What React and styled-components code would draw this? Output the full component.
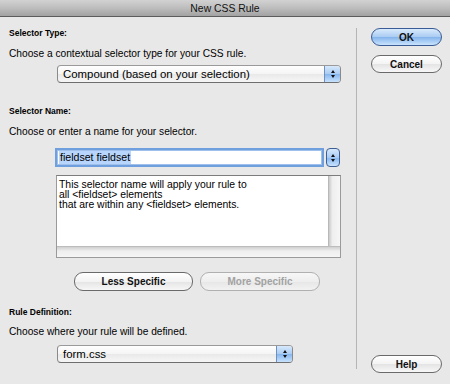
import React from "react";
import styled, { createGlobalStyle } from "styled-components";

const Global = createGlobalStyle`
  html, body { margin: 0; padding: 0; background: #e8e8e8; }
  body { font-family: "Liberation Sans", Arial, sans-serif; color: #000; }
`;

const Window = styled.div`
  width: 450px;
  height: 384px;
  background: #e8e8e8;
  display: flex;
  flex-direction: column;
  overflow: hidden;
`;

const TitleBar = styled.div`
  border-bottom: 1px solid #5c5c5c;
  background: linear-gradient(#d2d2d2, #bdbdbd 50%, #a2a2a2);
  display: flex;
  align-items: center;
  justify-content: center;
  font-size: 10.4px;
  line-height: 16px;
  padding-top: 2px;
  box-sizing: border-box;
  height: 17px;
  color: #111;
`;

const Body = styled.div`
  flex: 1;
  display: flex;
`;

const Main = styled.div`
  width: 356px;
  padding: 10px 0 0 9px;
  box-sizing: border-box;
  display: flex;
  flex-direction: column;
`;

const Divider = styled.div`
  width: 1px;
  background: #b4b4b4;
  margin: 11px 0 15px;
`;

const Side = styled.div`
  flex: 1;
  padding: 11px 8px 11px 14px;
  display: flex;
  flex-direction: column;
  justify-content: space-between;
`;

const SideGroup = styled.div`
  display: flex;
  flex-direction: column;
  gap: 9px;
`;

const Label = styled.div`
  font-weight: bold;
  font-size: 8.5px;
  line-height: 12px;
  margin-top: ${(p) => p.$mt || 0}px;
`;

const Hint = styled.div`
  font-size: 10.2px;
  line-height: 12px;
  margin-top: ${(p) => p.$mt || 0}px;
`;

const Select = styled.div`
  margin: ${(p) => p.$mt}px 0 0 48px;
  width: ${(p) => p.$w}px;
  height: 18px;
  box-sizing: border-box;
  border: 1px solid #8a8a8a;
  border-top-color: #9a9a9a;
  border-bottom-color: #6e6e6e;
  border-radius: 4px;
  display: flex;
  overflow: hidden;
  background: linear-gradient(#ffffff, #f4f4f4 50%, #e9e9e9 51%, #f6f6f6);
`;

const SelectText = styled.div`
  flex: 1;
  font-size: 11.4px;
  line-height: 16px;
  padding-left: 5px;
`;

const SelectArrows = styled.div`
  width: 15px;
  border-left: 1px solid #6f8fc0;
  background: linear-gradient(#d7e9fc, #a8cbf3 50%, #86b6ee 51%, #c7e2fd);
  display: flex;
  flex-direction: column;
  align-items: center;
  justify-content: center;
  gap: 2px;
`;

const TriUp = styled.div`
  width: 0;
  height: 0;
  border-left: 2.5px solid transparent;
  border-right: 2.5px solid transparent;
  border-bottom: 3px solid #111;
`;

const TriDown = styled.div`
  width: 0;
  height: 0;
  border-left: 2.5px solid transparent;
  border-right: 2.5px solid transparent;
  border-top: 3px solid #111;
`;

const InputRow = styled.div`
  margin: 10px 0 0 46px;
  display: flex;
  align-items: center;
  gap: 2px;
`;

const Input = styled.div`
  width: 269px;
  height: 19px;
  box-sizing: border-box;
  border: 2px solid #6f9fdc;
  box-shadow: inset 0 0 0 1px #9fc0ea;
  background: #fff;
  display: flex;
  align-items: center;
  padding-left: 2px;
`;

const Selected = styled.span`
  background: #b7d5fd;
  font-size: 10.6px;
  line-height: 13px;
  padding: 0 1px;
`;

const Stepper = styled.div`
  width: 14px;
  height: 19px;
  box-sizing: border-box;
  border: 1px solid #3e5f94;
  border-radius: 4px;
  background: linear-gradient(#d7e9fc, #a8cbf3 50%, #86b6ee 51%, #c7e2fd);
  display: flex;
  flex-direction: column;
  align-items: center;
  justify-content: center;
  gap: 2px;
`;

const TextArea = styled.div`
  margin: 8px 0 0 47px;
  width: 285px;
  height: 83px;
  box-sizing: border-box;
  border: 1px solid #9a9a9a;
  border-top-color: #7c7c7c;
  display: grid;
  grid-template-columns: 1fr 12px;
  grid-template-rows: 1fr 11px;
  background: #fff;
`;

const TextContent = styled.div`
  font-size: 10.4px;
  line-height: 10px;
  padding: 4px 0 0 2px;
  background: #fff;
`;

const VScroll = styled.div`
  background: linear-gradient(90deg, #c9c9c9, #eeeeee 30%, #f6f6f6);
  border-left: 1px solid #b8b8b8;
`;

const HScroll = styled.div`
  grid-column: 1 / span 2;
  background: linear-gradient(#cfcfcf, #eeeeee 40%, #f5f5f5);
  border-top: 1px solid #bdbdbd;
`;

const ButtonRow = styled.div`
  margin: 14px 0 0 65px;
  display: flex;
  gap: 7px;
`;

const PillButton = styled.div`
  width: ${(p) => p.$w || 71}px;
  height: ${(p) => p.$h || 18}px;
  box-sizing: border-box;
  border-radius: 9px;
  border: 1px solid ${(p) => (p.$primary ? "#3a5b93" : p.$disabled ? "#b0b0b0" : "#6a6a6a")};
  background: ${(p) =>
    p.$primary
      ? "linear-gradient(#d9eafc, #a9cbf2 50%, #84b4ec 51%, #c9e3fd)"
      : p.$disabled
      ? "linear-gradient(#f7f7f7, #eeeeee 50%, #e6e6e6 51%, #f2f2f2)"
      : "linear-gradient(#ffffff, #f3f3f3 50%, #e4e4e4 51%, #f7f7f7)"};
  display: flex;
  align-items: center;
  justify-content: center;
  font-weight: bold;
  font-size: 10px;
  color: ${(p) => (p.$disabled ? "#a2a2a2" : "#111")};
`;

export default function App() {
  return (
    <Window>
      <Global />
      <TitleBar>New CSS Rule</TitleBar>
      <Body>
        <Main>
          <Label>Selector Type:</Label>
          <Hint $mt={9}>Choose a contextual selector type for your CSS rule.</Hint>
          <Select $mt={5} $w={284}>
            <SelectText>Compound (based on your selection)</SelectText>
            <SelectArrows>
              <TriUp />
              <TriDown />
            </SelectArrows>
          </Select>

          <Label $mt={22}>Selector Name:</Label>
          <Hint $mt={9}>Choose or enter a name for your selector.</Hint>
          <InputRow>
            <Input>
              <Selected>fieldset fieldset</Selected>
            </Input>
            <Stepper>
              <TriUp />
              <TriDown />
            </Stepper>
          </InputRow>
          <TextArea>
            <TextContent>
              This selector name will apply your rule to
              <br />
              all &lt;fieldset&gt; elements
              <br />
              that are within any &lt;fieldset&gt; elements.
            </TextContent>
            <VScroll />
            <HScroll />
          </TextArea>
          <ButtonRow>
            <PillButton $w={119} $h={19}>Less Specific</PillButton>
            <PillButton $w={120} $h={19} $disabled>
              More Specific
            </PillButton>
          </ButtonRow>

          <Label $mt={15}>Rule Definition:</Label>
          <Hint $mt={8}>Choose where your rule will be defined.</Hint>
          <Select $mt={7} $w={236}>
            <SelectText>form.css</SelectText>
            <SelectArrows>
              <TriUp />
              <TriDown />
            </SelectArrows>
          </Select>
        </Main>
        <Divider />
        <Side>
          <SideGroup>
            <PillButton $primary>OK</PillButton>
            <PillButton>Cancel</PillButton>
          </SideGroup>
          <PillButton>Help</PillButton>
        </Side>
      </Body>
    </Window>
  );
}
